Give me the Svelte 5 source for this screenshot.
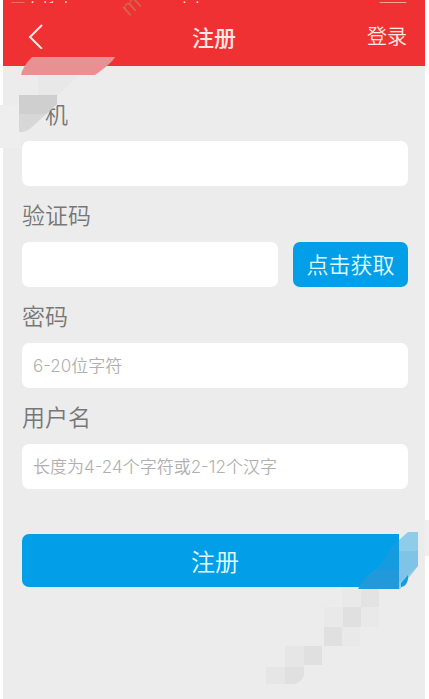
<script lang="ts">
  let phone = $state('');
  let code = $state('');
  let password = $state('');
  let username = $state('');
</script>

<div class="screen">
  <header>
    <div class="status" aria-hidden="true">
      <span>正在搜索...</span>
      <span class="time">上午9:30</span>
      <span class="battery"></span>
    </div>
    <nav>
      <button class="back" type="button" aria-label="返回">
        <svg width="22" height="26" viewBox="0 0 22 26" fill="none" stroke="#ffe9e2" stroke-width="2">
          <path d="M21 2 9 14l12 12" />
        </svg>
      </button>
      <h1>注册</h1>
      <a class="login" href="#login">登录</a>
    </nav>
  </header>

  <form onsubmit={(e) => e.preventDefault()}>
    <label for="phone">手机</label>
    <input id="phone" type="tel" bind:value={phone} />

    <label for="code">验证码</label>
    <div class="row">
      <input id="code" type="text" bind:value={code} />
      <button class="blue get-code" type="button">点击获取</button>
    </div>

    <label for="password">密码</label>
    <input id="password" type="password" placeholder="6-20位字符" bind:value={password} />

    <label for="username">用户名</label>
    <input id="username" type="text" placeholder="长度为4-24个字符或2-12个汉字" bind:value={username} />

    <button class="blue submit" type="submit">注册</button>
  </form>

  <svg class="smudge smudge-top" width="160" height="160" viewBox="0 0 160 160" aria-hidden="true">
    <text class="mark" transform="translate(129 17) rotate(-42)">m</text>
    <path d="M0 105h20v43H0z" fill="#eeeeef" />
    <path d="M38 76h40l-21 20v10H38z" fill="#e8e8e8" />
    <path d="M21 75q2-9 11-18h83q-3 6-20 18z" fill="#e99093" />
    <path d="M38 104h19L45 114v12H30z" fill="#edecec" />
    <path d="M19 95h38v9L32 127q-6 6-13 5z" fill="#d7d7d8" />
    <path d="M19 95h38v9L46 114H19z" fill="#cfcfd0" />
  </svg>

  <svg class="smudge smudge-bottom" width="171" height="179" viewBox="258 520 171 179" aria-hidden="true">
    <path d="M425 520h4v36h-4z" fill="#efefef" />
    <path d="M399 534h9v53h-9z" fill="#edecec" />
    <path d="M358 589q5-11 17-19h24v19z" fill="#2299db" />
    <path d="m388 551 11-11v30h-24q6-5 11-13z" fill="#159ce0" />
    <path d="m399 540 9-8h10v34l-18 23h-1z" fill="#8fcce9" />
    <path d="M399 551h19v15l-19 17z" fill="#7fc4e7" />
    <path d="M408 575v4q-1 7-7 8v-4z" fill="#159ce0" />
    <g fill="#e0e0e1">
      <path d="M361 589h18v18h-18z" opacity=".7" />
      <path d="M343 607h18v20h-18z" />
      <path d="M324 627h18v19h-18z" />
      <path d="M304 646h18v19h-18z" />
      <path d="M285 667h19v8q-3 8-10 9h-9z" />
      <path d="M285 646h19v21h-19zM266 667h19v17h-19z" opacity=".5" />
      <path d="M342 589h19v18h-19zM361 607h18v20h-18zM324 607h19v20h-19zM342 627h18v19h-18z" opacity=".3" />
    </g>
  </svg>
</div>

<style>
  :global(body) {
    margin: 0;
    background: #fff;
  }

  .screen {
    position: relative;
    box-sizing: border-box;
    min-height: 100vh;
    padding: 0 4px 0 3px;
    overflow: hidden;
    font-family: 'Noto Sans CJK SC', sans-serif;
    background: linear-gradient(#edecec, #edecec) content-box;
  }

  header {
    background: #ef3134;
    color: #ffe9e2;
  }

  /* only the lower edge of the status bar is in view */
  .status {
    display: grid;
    grid-template-columns: 1fr auto 1fr;
    align-items: end;
    height: 3px;
    padding: 0 18px 0 7px;
    overflow: hidden;
    font-size: 16px;
    line-height: 16px;
  }

  .battery {
    justify-self: end;
    width: 28px;
    height: 12px;
    margin-bottom: 2px;
    border-radius: 2px;
    background: #f7a39c;
  }

  nav {
    box-sizing: border-box;
    display: grid;
    grid-template-columns: 1fr auto 1fr;
    align-items: center;
    height: 63px;
    padding: 2px 18px 0 18px;
  }

  button {
    padding: 0;
    border: 0;
    font-family: inherit;
    cursor: pointer;
  }

  .back {
    display: flex;
    justify-self: start;
    background: none;
  }

  h1 {
    margin: 0;
    font-size: 22px;
    line-height: 32px;
    font-weight: 500;
  }

  .login {
    justify-self: end;
    color: inherit;
    font-size: 20px;
    font-weight: 350;
    line-height: 32px;
    text-decoration: none;
  }

  form {
    display: flex;
    flex-direction: column;
    padding: 19px 17px 0 19px;
  }

  label {
    padding: 12px 0;
    color: #777;
    font-size: 23px;
    font-weight: 350;
    line-height: 32px;
  }

  input {
    box-sizing: border-box;
    width: 100%;
    min-width: 0;
    height: 45px;
    padding: 0 11px;
    border: 0;
    border-radius: 7px;
    background: #fff;
    color: #555;
    font-family: Inter, 'Noto Sans CJK SC', sans-serif;
    font-size: 17px;
    font-weight: 350;
  }

  input::placeholder {
    color: #b0b0b0;
    opacity: 1;
  }

  .row {
    display: flex;
    gap: 15px;
  }

  .row input {
    flex: 1;
  }

  .blue {
    border-radius: 7px;
    background: #029fe8;
    color: #e2fbff;
    font-size: 22px;
    font-weight: 350;
  }

  .get-code {
    flex: 0 0 115px;
    padding-bottom: 4px;
  }

  .submit {
    height: 53px;
    margin-top: 45px;
    font-size: 24px;
  }

  .smudge {
    position: absolute;
    pointer-events: none;
  }

  .smudge-top {
    top: 0;
    left: 0;
  }

  .smudge-bottom {
    top: 520px;
    right: 0;
  }

  .mark {
    fill: #d9604f;
    font-family: 'Liberation Sans', sans-serif;
    font-size: 22px;
  }
</style>
